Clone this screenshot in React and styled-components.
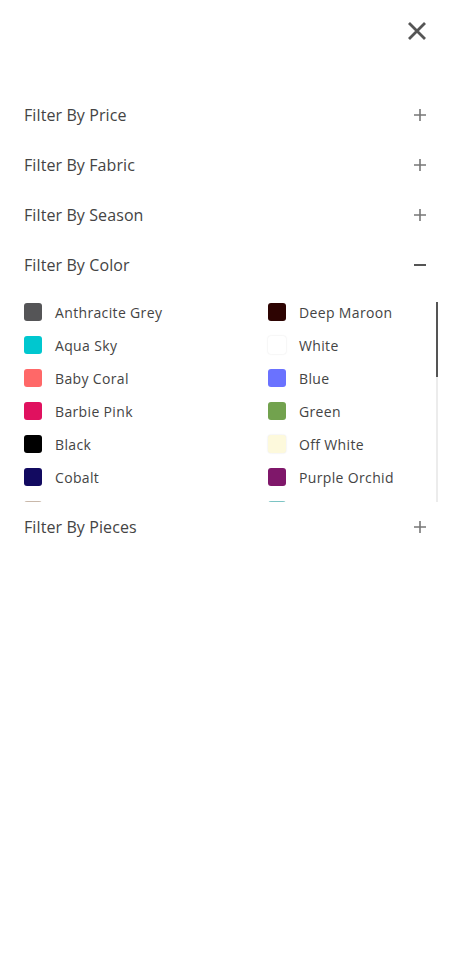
import React, { useState } from 'react';
import styled, { createGlobalStyle } from 'styled-components';

const GlobalStyle = createGlobalStyle`
  html, body {
    margin: 0;
    padding: 0;
    background: #fff;
  }
  body {
    font-family: "Open Sans", "Noto Sans", sans-serif;
    color: #333;
  }
`;

const Panel = styled.div`
  width: 450px;
  min-height: 964px;
  background: #fff;
  box-sizing: border-box;
`;

const TopBar = styled.div`
  height: 90px;
  display: flex;
  justify-content: flex-end;
  align-items: flex-start;
  padding: 20px 22px 0 0;
  box-sizing: border-box;
`;

const CloseButton = styled.button`
  width: 22px;
  height: 22px;
  padding: 0;
  border: none;
  background: none;
  display: flex;
  align-items: center;
  justify-content: center;
  cursor: pointer;
`;

const Section = styled.div`
  padding: 0 24px;
`;

const Header = styled.div`
  height: 50px;
  display: flex;
  align-items: center;
  justify-content: space-between;
  cursor: pointer;
`;

const Title = styled.span`
  font-size: 16px;
  font-weight: 400;
  color: #444;
  letter-spacing: 0.1px;
`;

const ToggleIcon = styled.span`
  width: 14px;
  height: 14px;
  display: flex;
  align-items: center;
  justify-content: center;
  margin-right: -1px;
`;

const ListWrap = styled.div`
  position: relative;
  margin-top: 12px;
  margin-right: -12px;
`;

const ColorList = styled.div`
  height: 200px;
  overflow-y: auto;
  display: grid;
  grid-template-columns: 244px 1fr;
  row-gap: 15px;
  padding-top: 1px;
  box-sizing: border-box;
  align-content: start;
  scrollbar-width: none;

  &::-webkit-scrollbar {
    display: none;
  }
`;

const ScrollTrack = styled.div`
  position: absolute;
  top: 0;
  right: 0;
  width: 2px;
  height: 200px;
  background: #ececec;
`;

const ScrollThumb = styled.div`
  width: 2px;
  height: 75px;
  background: #555;
`;

const ColorItem = styled.label`
  display: flex;
  align-items: center;
  height: 18px;
  gap: 13px;
  font-size: 14px;
  font-weight: 400;
  letter-spacing: 0.35px;
  color: #444;
  cursor: pointer;
`;

const Swatch = styled.span`
  width: 18px;
  height: 18px;
  flex-shrink: 0;
  border-radius: 3px;
  background: ${(p) => p.$color};
  box-shadow: ${(p) => (p.$light ? '0 0 2px rgba(0,0,0,0.12)' : 'none')};
`;

const colors = [
  ['Anthracite Grey', '#555557'],
  ['Deep Maroon', '#2d0402'],
  ['Aqua Sky', '#00c7cf'],
  ['White', '#ffffff', true],
  ['Baby Coral', '#ff6868'],
  ['Blue', '#6a72ff'],
  ['Barbie Pink', '#e0115f'],
  ['Green', '#72a24e'],
  ['Black', '#000000'],
  ['Off White', '#fdf9dc', true],
  ['Cobalt', '#120a60'],
  ['Purple Orchid', '#7f176a'],
  ['Beige', '#c9b8aa'],
  ['Teal', '#7cc4c4'],
];

const PlusIcon = () => (
  <svg width="14" height="14" viewBox="0 0 14 14">
    <path d="M7 1v12M1 7h12" stroke="#777" strokeWidth="1.6" fill="none" />
  </svg>
);

const MinusIcon = () => (
  <svg width="14" height="14" viewBox="0 0 14 14">
    <path d="M1 7h12" stroke="#555" strokeWidth="2" fill="none" />
  </svg>
);

const FilterSection = ({ title, open, onToggle, children }) => (
  <Section>
    <Header onClick={onToggle}>
      <Title>{title}</Title>
      <ToggleIcon>{open ? <MinusIcon /> : <PlusIcon />}</ToggleIcon>
    </Header>
    {open && children}
  </Section>
);

const App = () => {
  const [openKey, setOpenKey] = useState('color');
  const toggle = (k) => setOpenKey(openKey === k ? null : k);

  return (
    <Panel>
      <GlobalStyle />
      <TopBar>
        <CloseButton aria-label="close">
          <svg width="20" height="20" viewBox="0 0 20 20">
            <path d="M2 2L18 18M18 2L2 18" stroke="#555" strokeWidth="2.8" fill="none" />
          </svg>
        </CloseButton>
      </TopBar>
      <FilterSection title="Filter By Price" open={openKey === 'price'} onToggle={() => toggle('price')} />
      <FilterSection title="Filter By Fabric" open={openKey === 'fabric'} onToggle={() => toggle('fabric')} />
      <FilterSection title="Filter By Season" open={openKey === 'season'} onToggle={() => toggle('season')} />
      <FilterSection title="Filter By Color" open={openKey === 'color'} onToggle={() => toggle('color')}>
        <ListWrap>
          <ColorList>
            {colors.map(([name, hex, light]) => (
              <ColorItem key={name}>
                <Swatch $color={hex} $light={light} />
                {name}
              </ColorItem>
            ))}
          </ColorList>
          <ScrollTrack>
            <ScrollThumb />
          </ScrollTrack>
        </ListWrap>
      </FilterSection>
      <FilterSection title="Filter By Pieces" open={openKey === 'pieces'} onToggle={() => toggle('pieces')} />
    </Panel>
  );
};

export default App;
